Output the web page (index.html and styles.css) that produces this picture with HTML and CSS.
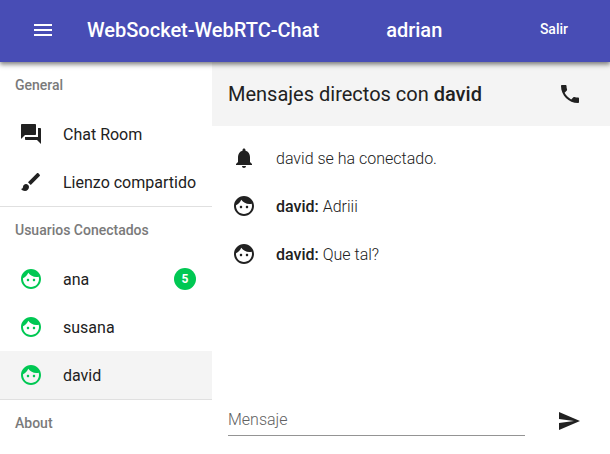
FILE: index.html
```html
<!DOCTYPE html>
<html lang="es">
<head>
<meta charset="utf-8">
<meta name="viewport" content="width=device-width, initial-scale=1">
<title>WebSocket-WebRTC-Chat</title>
<link rel="stylesheet" href="styles.css">
</head>
<body>
<svg class="sprite" aria-hidden="true">
  <symbol id="face" viewBox="0 0 24 24"><path d="M9 11.75c-.69 0-1.25.56-1.25 1.25s.56 1.25 1.25 1.25 1.25-.56 1.25-1.25-.56-1.25-1.25-1.25zm6 0c-.69 0-1.25.56-1.25 1.25s.56 1.25 1.25 1.25 1.25-.56 1.25-1.25-.56-1.25-1.25-1.25zM12 2C6.48 2 2 6.48 2 12s4.480 10 10 10 10-4.480 10-10S17.520 2 12 2zm0 18c-4.410 0-8-3.590-8-8 0-.29.02-.58.05-.86 2.360-1.050 4.230-2.980 5.210-5.370C11.070 8.330 14.050 10 17.420 10c.78 0 1.530-.09 2.250-.26.21.71.33 1.470.33 2.260 0 4.410-3.590 8-8 8z"/></symbol>
</svg>
<header class="topbar">
  <button class="icon-button" type="button" aria-label="Menú">
    <svg class="icon" viewBox="0 0 24 24"><path d="M3 18h18v-2H3v2zm0-5h18v-2H3v2zm0-7v2h18V6H3z"/></svg>
  </button>
  <h1 class="brand">WebSocket-WebRTC-Chat</h1>
  <span class="account">adrian</span>
  <button class="logout" type="button">Salir</button>
</header>
<div class="layout">
  <nav class="sidebar">
    <section class="group">
      <h2 class="subheader">General</h2>
      <a class="item" href="#room">
        <svg class="icon" viewBox="0 0 24 24"><path d="M21 6h-2v9H6v2c0 .55.45 1 1 1h11l4 4V7c0-.55-.45-1-1-1zm-4 6V3c0-.55-.45-1-1-1H3c-.55 0-1 .45-1 1v14l4-4h10c.55 0 1-.45 1-1z"/></svg>
        <span class="label">Chat Room</span>
      </a>
      <a class="item" href="#canvas">
        <svg class="icon" viewBox="0 0 24 24"><path d="M7 14c-1.660 0-3 1.340-3 3 0 1.310-1.160 2-2 2 .92 1.220 2.490 2 4 2 2.210 0 4-1.790 4-4 0-1.660-1.340-3-3-3zm13.710-9.370l-1.340-1.340c-.39-.39-1.020-.39-1.410 0L9 12.250 11.750 15l8.960-8.960c.39-.39.39-1.020 0-1.410z"/></svg>
        <span class="label">Lienzo compartido</span>
      </a>
    </section>
    <section class="group">
      <h2 class="subheader">Usuarios Conectados</h2>
      <a class="item user" href="#ana">
        <svg class="icon"><use href="#face"/></svg>
        <span class="label">ana</span>
        <span class="badge">5</span>
      </a>
      <a class="item user" href="#susana">
        <svg class="icon"><use href="#face"/></svg>
        <span class="label">susana</span>
      </a>
      <a class="item user active" href="#david">
        <svg class="icon"><use href="#face"/></svg>
        <span class="label">david</span>
      </a>
    </section>
    <section class="group">
      <h2 class="subheader">About</h2>
    </section>
  </nav>
  <main class="chat">
    <div class="chat-header">
      <h2 class="chat-title">Mensajes directos con <strong>david</strong></h2>
      <button class="icon-button" type="button" aria-label="Llamar">
        <svg class="icon" viewBox="0 0 24 24"><path d="M6.620 10.790c1.440 2.830 3.760 5.140 6.590 6.590l2.200-2.200c.27-.27.67-.36 1.020-.24 1.120.37 2.330.57 3.570.57.55 0 1 .45 1 1V20c0 .55-.45 1-1 1-9.390 0-17-7.610-17-17 0-.55.45-1 1-1h3.500c.55 0 1 .45 1 1 0 1.250.2 2.450.57 3.570.11.35.03.74-.25 1.020l-2.200 2.200z"/></svg>
      </button>
    </div>
    <ul class="messages">
      <li class="message">
        <svg class="icon" viewBox="0 0 24 24"><path d="M12 22c1.100 0 2-.9 2-2h-4c0 1.100.89 2 2 2zm6-6v-5c0-3.070-1.640-5.640-4.500-6.320V4c0-.83-.67-1.500-1.500-1.500s-1.500.67-1.500 1.500v.68C7.630 5.360 6 7.920 6 11v5l-2 2v1h16v-1l-2-2z"/></svg>
        <span class="label">david se ha conectado.</span>
      </li>
      <li class="message">
        <svg class="icon"><use href="#face"/></svg>
        <span class="label"><strong>david:</strong> Adriii</span>
      </li>
      <li class="message">
        <svg class="icon"><use href="#face"/></svg>
        <span class="label"><strong>david:</strong> Que tal?</span>
      </li>
    </ul>
    <form class="composer">
      <input class="field" type="text" placeholder="Mensaje" aria-label="Mensaje">
      <button class="icon-button" type="button" aria-label="Enviar">
        <svg class="icon" viewBox="0 0 24 24"><path d="M2.010 21L23 12 2.010 3 2 10l15 2-15 2z"/></svg>
      </button>
    </form>
  </main>
</div>
</body>
</html>
```
FILE: styles.css
```css
* {
  box-sizing: border-box;
}

body {
  display: flex;
  flex-direction: column;
  min-height: 100vh;
  margin: 0;
  background: #fff;
  color: #212121;
  font-family: Roboto, "Liberation Sans", sans-serif;
  font-size: 16px;
  line-height: 24px;
}

h1,
h2 {
  margin: 0;
  font-weight: 500;
}

strong {
  font-weight: 500;
}

button {
  padding: 0;
  border: 0;
  background: none;
  color: inherit;
  font: inherit;
  cursor: pointer;
}

.sprite {
  display: none;
}

.icon {
  display: block;
  flex: none;
  width: 24px;
  height: 24px;
  fill: currentColor;
}

.icon-button {
  display: grid;
  flex: none;
  place-items: center;
  width: 48px;
  height: 48px;
}

.topbar {
  position: relative;
  z-index: 1;
  display: flex;
  align-items: center;
  padding: 0 42px 2px 19px;
  height: 62px;
  background: #484db5;
  color: #fff;
  font-size: 20px;
  font-weight: 500;
  box-shadow: 0 2px 4px rgba(0, 0, 0, 0.4), 0 4px 5px rgba(0, 0, 0, 0.14);
}

.brand {
  margin: 0 67px 0 20px;
  font-size: 20px;
}

.logout {
  margin-left: auto;
  padding-bottom: 2px;
  font-size: 14px;
  font-weight: 500;
}

.layout {
  display: flex;
  flex: 1;
}

.sidebar {
  flex: none;
  width: 212px;
}

.group + .group {
  border-top: 1px solid #e0e0e0;
}

.subheader {
  padding: 0 15px 2px;
  color: #7a7a7a;
  font-size: 14px;
  line-height: 46px;
}

.item {
  display: flex;
  gap: 20px;
  align-items: center;
  height: 48px;
  padding: 0 16px 0 19px;
  color: inherit;
  text-decoration: none;
  white-space: nowrap;
}

.label {
  padding-top: 2px;
}

.user .icon {
  color: #00c853;
}

.active {
  background: #f4f4f4;
}

.badge {
  width: 22px;
  margin-left: auto;
  border-radius: 50%;
  background: #00c853;
  color: #fff;
  font-size: 12px;
  font-weight: 700;
  line-height: 22px;
  text-align: center;
}

.chat {
  display: flex;
  flex: 1;
  flex-direction: column;
  min-width: 0;
}

.chat-header {
  display: flex;
  align-items: center;
  justify-content: space-between;
  height: 64px;
  padding: 0 16px;
  background: #f4f4f4;
}

.chat-title {
  font-size: 20px;
  font-weight: 400;
}

.messages {
  flex: 1;
  margin: 0;
  padding: 8px 20px;
  list-style: none;
}

.message {
  display: flex;
  gap: 20px;
  align-items: center;
  height: 48px;
  font-weight: 300;
}

.composer {
  display: flex;
  gap: 20px;
  align-items: center;
  padding: 0 17px 9px 16px;
}

.field {
  flex: 1;
  min-width: 0;
  height: 30px;
  padding: 0 0 2px;
  border: 0;
  border-bottom: 1px solid #949494;
  border-radius: 0;
  background: none;
  color: inherit;
  font: inherit;
  font-weight: 300;
  outline: 0;
}

.field::placeholder {
  color: #616161;
}
```
